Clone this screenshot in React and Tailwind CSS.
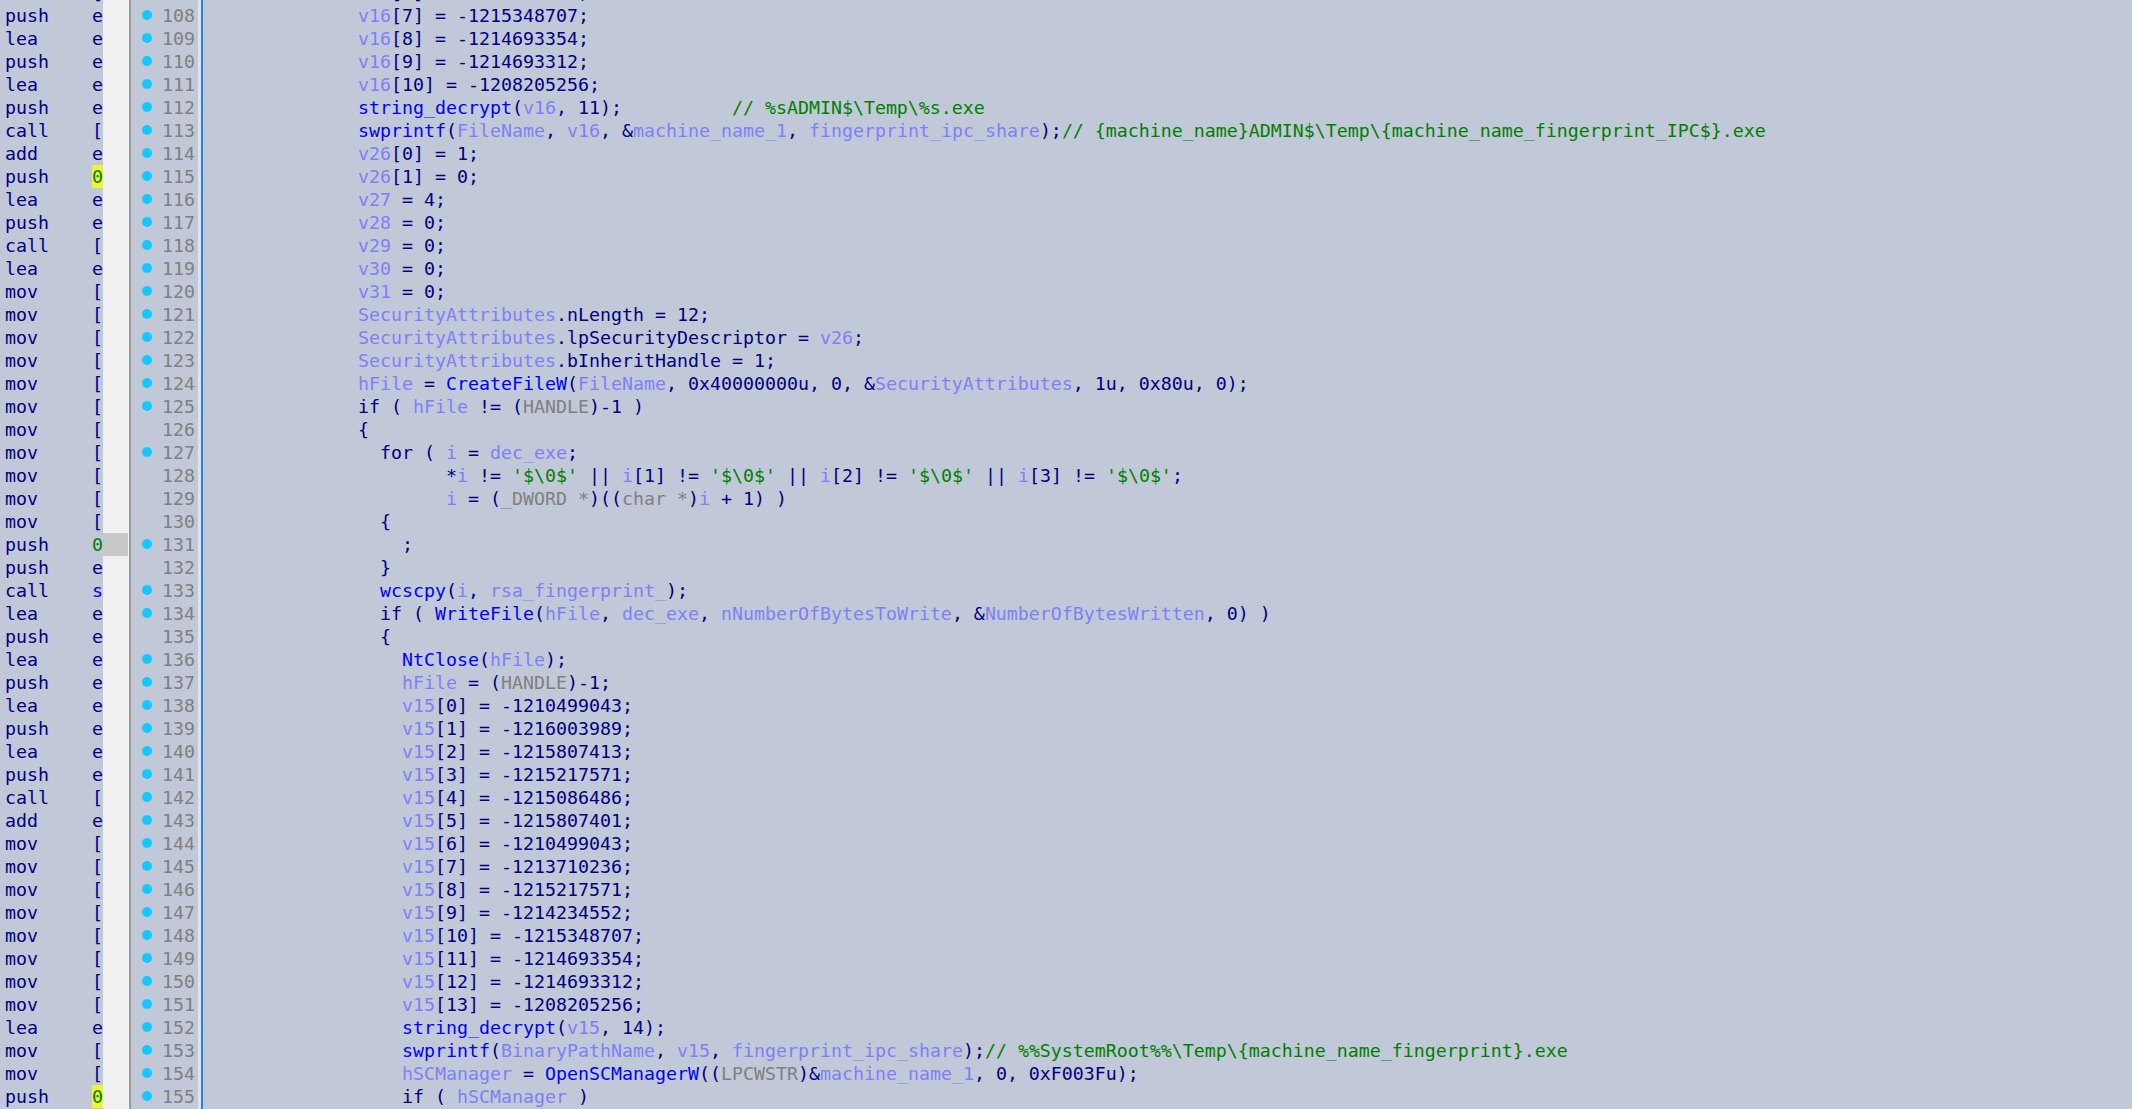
import React from "react";

const FUNCS = new Set(["string_decrypt", "swprintf", "CreateFileW", "wcscpy", "WriteFile", "NtClose", "OpenSCManagerW"]);
const KW = new Set(["if", "for"]);
const TYPES = new Set(["HANDLE", "LPCWSTR"]);

const COLOR = {
  n: "text-[#000080]",
  v: "text-[#7f7ff8]",
  f: "text-[#0000ff]",
  g: "text-[#008000]",
  t: "text-[#808080]",
};

function tokenize(s) {
  const out = [];
  const re = /(\/\/.*$)|('[^']*')|((?:_DWORD|char) \*)|([A-Za-z_][A-Za-z0-9_]*)|(0x[0-9A-Fa-f]+u?|\d+u?)|(\s+)|(.)/g;
  let m;
  let prev = "";
  while ((m = re.exec(s)) !== null) {
    let type = "n";
    const t = m[0];
    if (m[1] || m[2]) type = "g";
    else if (m[3]) type = "t";
    else if (m[4]) {
      if (prev === ".") type = "n";
      else if (FUNCS.has(t)) type = "f";
      else if (KW.has(t)) type = "n";
      else if (TYPES.has(t)) type = "t";
      else type = "v";
    } else if (m[6]) type = out.length ? out[out.length - 1][0] : "n";
    if (!m[6]) prev = t;
    if (out.length && out[out.length - 1][0] === type) out[out.length - 1][1] += t;
    else out.push([type, t]);
  }
  return out;
}

const I2 = "  ";
const I4 = "    ";
const I8 = "        ";

const LINES = [
  [107, true, "v16[6] = -1214234552;", "mov", "["],
  [108, true, "v16[7] = -1215348707;", "push", "e"],
  [109, true, "v16[8] = -1214693354;", "lea", "e"],
  [110, true, "v16[9] = -1214693312;", "push", "e"],
  [111, true, "v16[10] = -1208205256;", "lea", "e"],
  [112, true, "string_decrypt(v16, 11);          // %sADMIN$\\Temp\\%s.exe", "push", "e"],
  [113, true, "swprintf(FileName, v16, &machine_name_1, fingerprint_ipc_share);// {machine_name}ADMIN$\\Temp\\{machine_name_fingerprint_IPC$}.exe", "call", "["],
  [114, true, "v26[0] = 1;", "add", "e"],
  [115, true, "v26[1] = 0;", "push", "0Y"],
  [116, true, "v27 = 4;", "lea", "e"],
  [117, true, "v28 = 0;", "push", "e"],
  [118, true, "v29 = 0;", "call", "["],
  [119, true, "v30 = 0;", "lea", "e"],
  [120, true, "v31 = 0;", "mov", "["],
  [121, true, "SecurityAttributes.nLength = 12;", "mov", "["],
  [122, true, "SecurityAttributes.lpSecurityDescriptor = v26;", "mov", "["],
  [123, true, "SecurityAttributes.bInheritHandle = 1;", "mov", "["],
  [124, true, "hFile = CreateFileW(FileName, 0x40000000u, 0, &SecurityAttributes, 1u, 0x80u, 0);", "mov", "["],
  [125, true, "if ( hFile != (HANDLE)-1 )", "mov", "["],
  [126, false, "{", "mov", "["],
  [127, true, I2 + "for ( i = dec_exe;", "mov", "["],
  [128, false, I8 + "*i != '$\\0$' || i[1] != '$\\0$' || i[2] != '$\\0$' || i[3] != '$\\0$';", "mov", "["],
  [129, false, I8 + "i = (_DWORD *)((char *)i + 1) )", "mov", "["],
  [130, false, I2 + "{", "mov", "["],
  [131, true, I4 + ";", "push", "0G"],
  [132, false, I2 + "}", "push", "e"],
  [133, true, I2 + "wcscpy(i, rsa_fingerprint_);", "call", "s"],
  [134, true, I2 + "if ( WriteFile(hFile, dec_exe, nNumberOfBytesToWrite, &NumberOfBytesWritten, 0) )", "lea", "e"],
  [135, false, I2 + "{", "push", "e"],
  [136, true, I4 + "NtClose(hFile);", "lea", "e"],
  [137, true, I4 + "hFile = (HANDLE)-1;", "push", "e"],
  [138, true, I4 + "v15[0] = -1210499043;", "lea", "e"],
  [139, true, I4 + "v15[1] = -1216003989;", "push", "e"],
  [140, true, I4 + "v15[2] = -1215807413;", "lea", "e"],
  [141, true, I4 + "v15[3] = -1215217571;", "push", "e"],
  [142, true, I4 + "v15[4] = -1215086486;", "call", "["],
  [143, true, I4 + "v15[5] = -1215807401;", "add", "e"],
  [144, true, I4 + "v15[6] = -1210499043;", "mov", "["],
  [145, true, I4 + "v15[7] = -1213710236;", "mov", "["],
  [146, true, I4 + "v15[8] = -1215217571;", "mov", "["],
  [147, true, I4 + "v15[9] = -1214234552;", "mov", "["],
  [148, true, I4 + "v15[10] = -1215348707;", "mov", "["],
  [149, true, I4 + "v15[11] = -1214693354;", "mov", "["],
  [150, true, I4 + "v15[12] = -1214693312;", "mov", "["],
  [151, true, I4 + "v15[13] = -1208205256;", "mov", "["],
  [152, true, I4 + "string_decrypt(v15, 14);", "lea", "e"],
  [153, true, I4 + "swprintf(BinaryPathName, v15, fingerprint_ipc_share);// %%SystemRoot%%\\Temp\\{machine_name_fingerprint}.exe", "mov", "["],
  [154, true, I4 + "hSCManager = OpenSCManagerW((LPCWSTR)&machine_name_1, 0, 0xF003Fu);", "mov", "["],
  [155, true, I4 + "if ( hSCManager )", "push", "0Y"],
  [156, true, I4 + "{", "lea", "e"],
];

function Operand({ op }) {
  if (op === "0Y")
    return <span className="bg-[#f2f230] text-[#008000] inline-block h-[23px]">0</span>;
  if (op === "0G") return <span className="text-[#008000]">0</span>;
  if (op === "s") return <span className="text-[#0000ff]">s</span>;
  return <span className="text-[#000080]">{op}</span>;
}

export default function App() {
  const font = { fontFamily: '"DejaVu Sans Mono", "Liberation Mono", monospace' };
  return (
    <div
      className="w-[2132px] h-[1109px] overflow-hidden bg-[#c1c8d8] flex text-[18.27px] leading-[23px]"
      style={font}
    >
      {/* disassembly column */}
      <div className="w-[103px] shrink-0 overflow-hidden">
        <div className="mt-[-19.5px]">
          {LINES.map(([n, , , ins, op]) => (
            <div key={n} className="h-[23px] flex whitespace-pre pl-[5px] text-[#000080]">
              <span className="w-[87px] shrink-0">{ins}</span>
              <Operand op={op} />
            </div>
          ))}
        </div>
      </div>
      {/* light strip */}
      <div className="w-[26px] shrink-0 bg-[#f0f0f0] overflow-hidden">
        <div className="mt-[-19.5px]">
          {LINES.map(([n]) => (
            <div key={n} className={n === 131 ? "h-[23px] bg-[#c8c8c8] mr-[1px]" : "h-[23px]"} />
          ))}
        </div>
      </div>
      <div className="w-[2px] shrink-0 bg-[#9a9a9a]" />
      {/* line numbers */}
      <div className="w-[67px] shrink-0 overflow-hidden">
        <div className="mt-[-19.5px]">
          {LINES.map(([n, dot]) => (
            <div key={n} className="h-[23px] flex items-center pr-[3px]">
              <div className="w-[30px] shrink-0 flex justify-center pl-[2px]">
                {dot && <div className="w-[10px] h-[10px] rounded-full bg-[#12c8ff]" />}
              </div>
              <span className="flex-1 text-right text-[#808080]">{n}</span>
            </div>
          ))}
        </div>
      </div>
      <div className="w-[3px] shrink-0 bg-[#dfe3ea]" />
      <div className="w-[2px] shrink-0 bg-[#2b7de8]" />
      {/* pseudocode */}
      <div className="flex-1 overflow-hidden">
        <div className="mt-[-19.5px] pl-[155px]">
          {LINES.map(([n, , code]) => (
            <div key={n} className="h-[23px] whitespace-pre">
              {tokenize(code).map(([t, s], i) => (
                <span key={i} className={COLOR[t]}>
                  {s}
                </span>
              ))}
            </div>
          ))}
        </div>
      </div>
    </div>
  );
}
